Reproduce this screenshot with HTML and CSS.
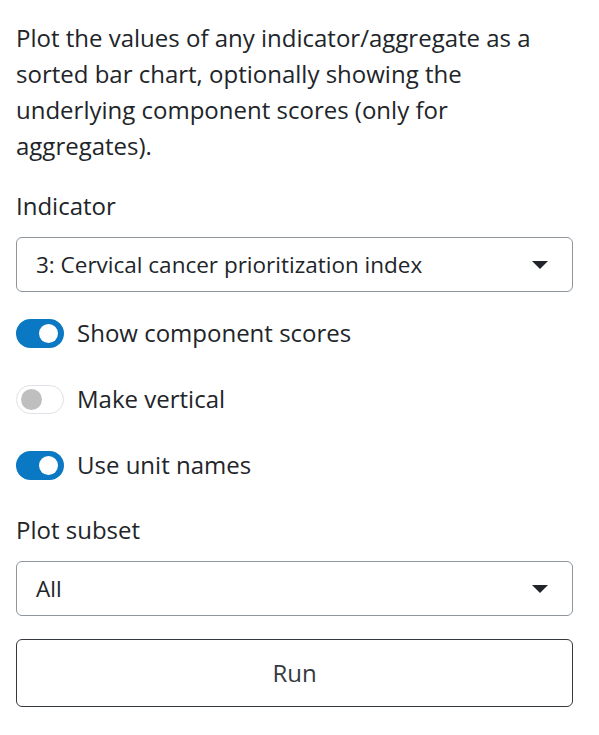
FILE: index.html
```html
<!DOCTYPE html>
<html lang="en">
<head>
<meta charset="utf-8">
<title>Bar chart options</title>
<link rel="stylesheet" href="styles.css">
</head>
<body>
<div class="panel">
  <p class="intro">Plot the values of any indicator/aggregate as a sorted bar chart, optionally showing the underlying component scores (only for aggregates).</p>

  <div class="field">
    <label class="field-label">Indicator</label>
    <div class="select">
      <span class="select-value">3: Cervical cancer prioritization index</span>
      <span class="caret"></span>
    </div>
  </div>

  <div class="switch-row">
    <span class="switch on"><span class="knob"></span></span>
    <span class="switch-label">Show component scores</span>
  </div>
  <div class="switch-row">
    <span class="switch off"><span class="knob"></span></span>
    <span class="switch-label">Make vertical</span>
  </div>
  <div class="switch-row last">
    <span class="switch on"><span class="knob"></span></span>
    <span class="switch-label">Use unit names</span>
  </div>

  <div class="field">
    <label class="field-label">Plot subset</label>
    <div class="select">
      <span class="select-value">All</span>
      <span class="caret"></span>
    </div>
  </div>

  <button class="run-btn" type="button">Run</button>
</div>
</body>
</html>
```

FILE: styles.css
```css
html, body {
  margin: 0;
  padding: 0;
  background: #ffffff;
}

body {
  font-family: "Open Sans", "Noto Sans", sans-serif;
  font-size: 24px;
  line-height: 36px;
  color: #212529;
}

.panel {
  width: 557px;
  padding: 20px 0 0 16px;
  display: flex;
  flex-direction: column;
}

.intro {
  margin: 0 0 24px 0;
}

.field {
  display: flex;
  flex-direction: column;
  gap: 13px;
  margin-bottom: 23px;
}

.field-label {
  display: block;
}

.select {
  height: 55px;
  box-sizing: border-box;
  border: 1px solid #8e959c;
  border-radius: 6px;
  padding: 9px 24px 9px 19px;
  display: flex;
  align-items: center;
  justify-content: space-between;
}

.select-value {
  color: #212529;
  font-size: 22.5px;
  line-height: 34px;
}

.caret {
  width: 0;
  height: 0;
  border-left: 8px solid transparent;
  border-right: 8px solid transparent;
  border-top: 8px solid #212529;
}

.switch-row {
  display: flex;
  align-items: center;
  gap: 13px;
  margin-bottom: 30px;
}

.switch-row.last {
  margin-bottom: 29px;
}

.switch {
  width: 48px;
  height: 29px;
  box-sizing: border-box;
  border-radius: 15px;
  display: flex;
  align-items: center;
  flex: none;
}

.switch.on {
  background: #0b78c3;
  justify-content: flex-end;
  padding-right: 6px;
}

.switch.on .knob {
  width: 19px;
  height: 19px;
  border-radius: 50%;
  background: #ffffff;
}

.switch.off {
  background: #ffffff;
  border: 1px solid #dee2e6;
  justify-content: flex-start;
  padding-left: 4px;
}

.switch.off .knob {
  width: 21px;
  height: 21px;
  border-radius: 50%;
  background: #bfbfbf;
}

.run-btn {
  margin-top: 0;
  height: 68px;
  box-sizing: border-box;
  border: 1px solid #343a40;
  border-radius: 6px;
  background: #ffffff;
  font-family: "Open Sans", "Noto Sans", sans-serif;
  font-size: 24px;
  line-height: 36px;
  color: #343a40;
  padding: 15px 18px;
  cursor: pointer;
}
```
